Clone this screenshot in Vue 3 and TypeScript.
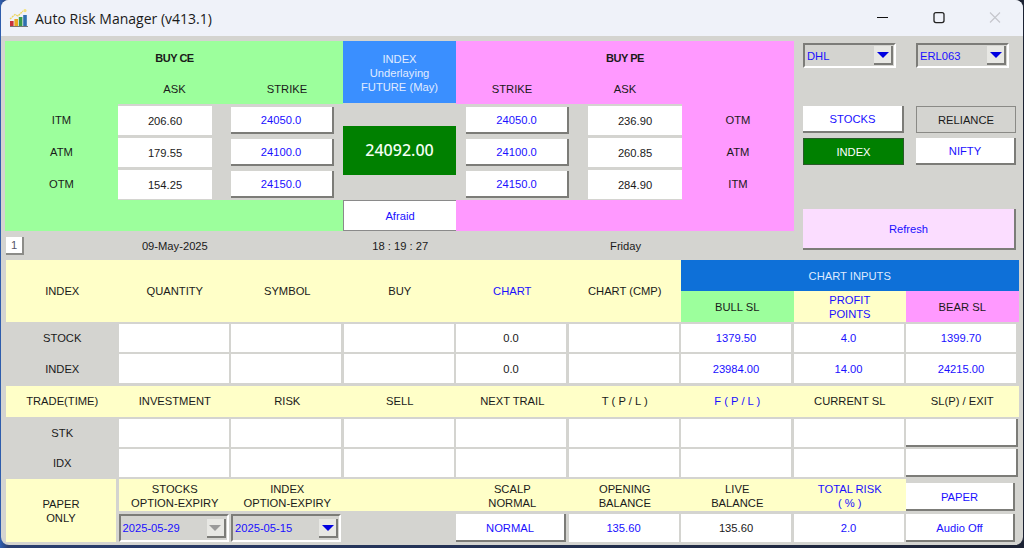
<script setup lang="ts">
const ceRows = [
  { label: 'ITM', ask: '206.60', strike: '24050.0' },
  { label: 'ATM', ask: '179.55', strike: '24100.0' },
  { label: 'OTM', ask: '154.25', strike: '24150.0' },
]
const peRows = [
  { label: 'OTM', ask: '236.90', strike: '24050.0' },
  { label: 'ATM', ask: '260.85', strike: '24100.0' },
  { label: 'ITM', ask: '284.90', strike: '24150.0' },
]
const header1 = [
  { t: 'INDEX' }, { t: 'QUANTITY' }, { t: 'SYMBOL' }, { t: 'BUY' },
  { t: 'CHART', blue: true }, { t: 'CHART (CMP)' },
]
const stockCells = ['', '', '', '0.0', '']
const header2 = [
  { t: 'TRADE(TIME)' }, { t: 'INVESTMENT' }, { t: 'RISK' }, { t: 'SELL' }, { t: 'NEXT TRAIL' },
  { t: 'T ( P / L )' }, { t: 'F ( P / L )', blue: true }, { t: 'CURRENT SL' }, { t: 'SL(P) / EXIT' },
]
</script>

<template>
  <div class="desktop">
    <div class="window">
      <header class="titlebar">
        <svg class="logo" width="20" height="20" viewBox="0 0 20 20">
          <rect x="1" y="13" width="3.6" height="5" fill="#c8323a" />
          <rect x="5.4" y="11" width="3.6" height="7" fill="#e8a820" />
          <rect x="9.8" y="9" width="3.6" height="9" fill="#3a9a4a" />
          <rect x="14.2" y="7" width="3.6" height="11" fill="#2f6fb0" />
          <path d="M1 11 L6 6.5 L9 8 L14 3" fill="none" stroke="#ecd55a" stroke-width="1.3" stroke-dasharray="2 .7" />
          <path d="M1 18.5 H19" stroke="#555" stroke-width=".8" />
          <circle cx="16" cy="2.6" r="1.6" fill="#f3e27a" />
        </svg>
        <span class="title">Auto Risk Manager (v413.1)</span>
        <div class="controls">
          <svg class="ctl" width="46" height="24" viewBox="0 0 46 24"><path d="M17 11.5 H28" stroke="#111" stroke-width="1.2" /></svg>
          <svg class="ctl" width="46" height="24" viewBox="0 0 46 24"><rect x="18" y="6.6" width="10" height="10" rx="2" fill="none" stroke="#222" stroke-width="1.3" /></svg>
          <svg class="ctl" width="46" height="24" viewBox="0 0 46 24"><path d="M18 6.5 L28 16.5 M28 6.5 L18 16.5" stroke="#c4c6cc" stroke-width="1.1" /></svg>
        </div>
      </header>

      <main class="content">
        <section class="top">
          <div class="panel ce">
            <div class="head ce-head">
              <span></span><b>BUY CE</b><span></span>
              <span></span><span>ASK</span><span>STRIKE</span>
            </div>
            <div class="mid">
              <div class="side">
                <span v-for="r in ceRows" :key="r.label">{{ r.label }}</span>
              </div>
              <div class="well ce-well">
                <div v-for="r in ceRows" :key="r.label" class="quote">
                  <span class="box ask">{{ r.ask }}</span>
                  <button class="btn strike">{{ r.strike }}</button>
                </div>
              </div>
            </div>
            <div class="foot"></div>
          </div>

          <div class="center">
            <div class="underlying">INDEX<br />Underlaying<br />FUTURE (May)</div>
            <div class="price-well"><div class="price">24092.00</div></div>
            <div class="mood">Afraid</div>
          </div>

          <div class="panel pe">
            <div class="head pe-head">
              <span></span><b>BUY PE</b><span></span>
              <span>STRIKE</span><span>ASK</span><span></span>
            </div>
            <div class="mid">
              <div class="well pe-well">
                <div v-for="r in peRows" :key="r.label" class="quote">
                  <button class="btn strike">{{ r.strike }}</button>
                  <span class="box ask">{{ r.ask }}</span>
                </div>
              </div>
              <div class="side">
                <span v-for="r in peRows" :key="r.label">{{ r.label }}</span>
              </div>
            </div>
            <div class="foot"></div>
          </div>

          <aside class="right">
            <div class="combos">
              <div class="combo wide"><span>DHL</span><i class="arrow"></i></div>
              <div class="combo wide"><span>ERL063</span><i class="arrow"></i></div>
            </div>
            <div class="switches">
              <button class="btn sw">STOCKS</button>
              <button class="flat sw">RELIANCE</button>
              <button class="active sw">INDEX</button>
              <button class="btn sw">NIFTY</button>
            </div>
            <button class="btn refresh">Refresh</button>
          </aside>
        </section>

        <section class="status">
          <div class="status-first"><span class="tab">1</span></div>
          <span>09-May-2025</span>
          <span></span>
          <span>18 : 19 : 27</span>
          <span></span>
          <span>Friday</span>
        </section>

        <section class="band tall">
          <div v-for="h in header1" :key="h.t" class="band-cell" :class="{ blue: h.blue }">{{ h.t }}</div>
          <div class="chart-inputs">
            <div class="ci-title">CHART INPUTS</div>
            <div class="ci-row">
              <div class="ci bull">BULL SL</div>
              <div class="ci profit blue">PROFIT<br />POINTS</div>
              <div class="ci bear">BEAR SL</div>
            </div>
          </div>
        </section>

        <section class="line first r1">
          <div class="name">STOCK</div>
          <div v-for="(c, i) in stockCells" :key="i" class="cell">{{ c }}</div>
          <div class="cell blue">1379.50</div>
          <div class="cell blue">4.0</div>
          <div class="cell blue">1399.70</div>
        </section>
        <section class="line r2">
          <div class="name">INDEX</div>
          <div v-for="(c, i) in stockCells" :key="i" class="cell">{{ c }}</div>
          <div class="cell blue">23984.00</div>
          <div class="cell blue">14.00</div>
          <div class="cell blue">24215.00</div>
        </section>

        <section class="band short">
          <div v-for="h in header2" :key="h.t" class="band-cell" :class="{ blue: h.blue }">{{ h.t }}</div>
        </section>

        <section class="line first r3">
          <div class="name">STK</div>
          <div v-for="n in 7" :key="n" class="cell"></div>
          <button class="btn exit"></button>
        </section>
        <section class="line">
          <div class="name">IDX</div>
          <div v-for="n in 7" :key="n" class="cell"></div>
          <button class="btn exit"></button>
        </section>

        <section class="bottom">
          <div class="paper-only">PAPER<br />ONLY</div>
          <div class="bottom-main">
            <div class="bottom-head">
              <div class="band-cell">STOCKS<br />OPTION-EXPIRY</div>
              <div class="band-cell">INDEX<br />OPTION-EXPIRY</div>
              <div class="band-cell"></div>
              <div class="band-cell">SCALP<br />NORMAL</div>
              <div class="band-cell">OPENING<br />BALANCE</div>
              <div class="band-cell">LIVE<br />BALANCE</div>
              <div class="band-cell blue">TOTAL RISK<br />( % )</div>
            </div>
            <div class="bottom-vals">
              <div class="combo date"><span>2025-05-29</span><i class="arrow off"></i></div>
              <div class="combo date"><span>2025-05-15</span><i class="arrow"></i></div>
              <div></div>
              <button class="btn normal">NORMAL</button>
              <div class="cell blue">135.60</div>
              <div class="cell">135.60</div>
              <div class="cell blue">2.0</div>
            </div>
          </div>
          <div class="bottom-btns">
            <button class="btn sm">PAPER</button>
            <button class="btn sm">Audio Off</button>
          </div>
        </section>
      </main>
    </div>
  </div>
</template>

<style scoped>
.desktop {
  width: 1024px;
  height: 548px;
  overflow: hidden;
  background: linear-gradient(90deg, #2f5fb0 0, #2a3f70 8px, #1c2233 100%);
  font-family: "Liberation Sans", Arial, sans-serif;
  font-size: 11.2px;
  color: #1a1a1a;
}
.window {
  width: 1022px;
  height: 545px;
  margin: 0 1px;
  background: #d4d4d0;
  border-radius: 8px;
  overflow: hidden;
  display: flex;
  flex-direction: column;
}
.titlebar {
  height: 36px;
  flex: none;
  background: #eff2f9;
  display: flex;
  align-items: center;
  padding-left: 8px;
}
.logo { margin-right: 6px; }
.title {
  font-family: "Open Sans", "Noto Sans", sans-serif;
  font-size: 14px;
  color: #1a1a1a;
}
.controls { margin-left: auto; display: flex; margin-right: 5px; gap: 10px; }
.content { padding: 5px 0 0 5px; }
.blue { color: #1a10ff !important; }

.top { display: flex; height: 190px; margin-left: -1px; }
.panel { display: flex; flex-direction: column; flex: none; }
.ce { width: 338px; background: #9cff9c; }
.pe { width: 338px; background: #ff99ff; }
.head { height: 62px; display: grid; grid-template-rows: 31px 31px; align-items: center; text-align: center; }
.head b { font-size: 11px; letter-spacing: -0.5px; }
.ce-head { grid-template-columns: 113px 113px 112px; padding-top: 1px; }
.pe-head { grid-template-columns: 112px 114px 112px; padding-top: 1px; }
.mid { height: 96px; display: flex; }
.foot { flex: 1; }
.side { width: 113px; flex: none; display: flex; flex-direction: column; }
.pe .side { width: 112px; }
.side span { height: 32.5px; display: flex; align-items: center; justify-content: center; }
.well { flex: 1; background: #d4d4d0; padding-top: 2px; display: flex; flex-direction: column; gap: 3px; }
.ce-well { padding-right: 9.5px; }
.pe-well { padding-left: 10px; }
.quote { display: flex; justify-content: space-between; height: 29px; }
.box {
  width: 94px;
  background: #fff;
  display: flex;
  align-items: center;
  justify-content: center;
}
.btn {
  border: none;
  border-right: 2px solid #7c7c78;
  border-bottom: 2px solid #7c7c78;
  background: #fff;
  color: #1a10ff;
  font: inherit;
  padding: 1px 0 0;
  display: block;
  box-sizing: border-box;
}
.strike { width: 103px; height: 27px; margin-top: 1px; }

.center { width: 113px; flex: none; display: flex; flex-direction: column; }
.underlying {
  height: 62px;
  background: #3a8fff;
  color: #e0ecff;
  text-align: center;
  line-height: 14px;
  padding-top: 11px;
  box-sizing: border-box;
}
.price-well { height: 97px; display: flex; align-items: center; padding-bottom: 3px; box-sizing: border-box; }
.price {
  width: 100%;
  height: 49px;
  background: #008000;
  color: #f4fff4;
  font-family: "Noto Sans", sans-serif;
  font-size: 16px;
  font-weight: 500;
  display: flex;
  align-items: center;
  justify-content: center;
}
.mood {
  flex: 1;
  background: #fff;
  border: 1px solid #8a8a8a;
  border-right: none;
  display: flex;
  align-items: center;
  justify-content: center;
  color: #1a10ff;
}

.right { flex: none; width: 220px; padding: 2px 0 0 9px; display: flex; flex-direction: column; box-sizing: border-box; }
.combos { display: flex; gap: 20px; flex: none; }
.combo {
  box-sizing: border-box;
  background: #d4d4d0;
  border: 2px solid;
  border-color: #7c7c78 #fff #fff #7c7c78;
  color: #1a10ff;
  display: flex;
  align-items: center;
  justify-content: space-between;
  padding-left: 2px;
  padding-right: 1px;
}
.wide { width: 93px; height: 25px; }
.arrow {
  width: 19px;
  height: 19px;
  box-sizing: border-box;
  background: #e8e8e4;
  border-right: 2px solid #7c7c78;
  border-bottom: 2px solid #7c7c78;
  position: relative;
  flex: none;
}
.arrow::after {
  content: "";
  position: absolute;
  left: 2.5px;
  top: 6px;
  border-left: 6px solid transparent;
  border-right: 6px solid transparent;
  border-top: 6px solid #0000e0;
}
.arrow.off::after { border-top-color: #9a9a9a; }
.switches {
  margin: 38px 0 0 0;
  display: grid;
  grid-template-columns: 101px 100px;
  grid-auto-rows: 27px;
  column-gap: 12px;
  row-gap: 5px;
  flex: none;
}
.sw { width: 100%; height: 27px; font: inherit; padding: 0; box-sizing: border-box; }
.flat { background: #d4d4d0; border: 1px solid #8a8a86; color: #1a1a1a; }
.active { background: #008000; color: #fff; border: 1px solid #2a5a2a; }
.refresh {
  margin: 44px 0 0 0;
  width: 213px;
  height: 41px;
  flex: none;
  background: #fbddff;
}

.status {
  height: 29px;
  display: grid;
  grid-template-columns: 112.5px repeat(5, 112.7px);
  align-items: center;
  text-align: center;
}
.status-first { display: flex; }
.tab {
  width: 18px;
  height: 18px;
  box-sizing: border-box;
  background: #fff;
  border-right: 2px solid #8c8c88;
  border-bottom: 2px solid #8c8c88;
  color: #55556a;
  line-height: 16px;
  text-align: center;
}

.band {
  width: 1012.5px;
  background: #ffffc8;
  display: grid;
  grid-template-columns: repeat(9, 112.5px);
}
.tall { height: 62px; }
.short { height: 30.5px; margin-top: 3px; padding-bottom: 0; }
.short .band-cell { padding-bottom: 1px; }
.band-cell { display: flex; align-items: center; justify-content: center; text-align: center; line-height: 14px; }
.chart-inputs { grid-column: span 3; display: flex; flex-direction: column; }
.ci-title {
  height: 31px;
  background: #0e70d8;
  color: #dfeaff;
  display: flex;
  align-items: center;
  justify-content: center;
}
.ci-row { flex: 1; display: grid; grid-template-columns: repeat(3, 112.5px); }
.ci { display: flex; align-items: center; justify-content: center; text-align: center; line-height: 14px; }
.bull { background: #9cff9c; }
.bear { background: #ff99ff; }
.profit { background: #ffffc8; }

.line {
  margin-top: 2px;
  display: grid;
  grid-template-columns: repeat(9, 112.5px);
  height: 28px;
}
.line.r2 { height: 29px; }
.line.first { margin-top: 2px; }
.line.r3 { margin-top: 2.5px; }
.name { display: flex; align-items: center; justify-content: center; }
.cell {
  background: #fff;
  margin-right: 2.5px;
  display: flex;
  align-items: center;
  justify-content: center;
}
.exit { width: 111.5px; height: 28px; }

.bottom { margin: 2px 0 0; display: flex; height: 63px; }
.paper-only {
  width: 110px;
  background: #ffffc8;
  margin-right: 2.5px;
  display: flex;
  align-items: center;
  justify-content: center;
  text-align: center;
  line-height: 14px;
}
.bottom-main { width: 787.5px; display: flex; flex-direction: column; }
.bottom-head {
  height: 32px;
  background: #ffffc8;
  display: grid;
  grid-template-columns: repeat(7, 112.5px);
}
.bottom-head .band-cell { padding-top: 1px; }
.bottom-vals {
  margin-top: 3px;
  height: 28px;
  display: grid;
  grid-template-columns: repeat(7, 112.5px);
}
.date { width: 110px; height: 28px; }
.normal { width: 110px; height: 28px; }
.bottom-btns { display: flex; flex-direction: column; padding-top: 4px; gap: 3px; }
.sm { width: 109px; height: 28px; }
</style>

<style>
html, body { margin: 0; background: #1c2233; }
</style>
